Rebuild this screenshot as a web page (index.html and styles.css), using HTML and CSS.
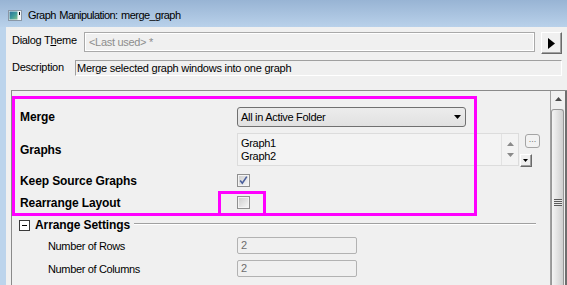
FILE: index.html
```html
<!DOCTYPE html>
<html>
<head>
<meta charset="utf-8">
<link rel="stylesheet" href="styles.css">
</head>
<body>
<div class="window">
  <div class="titlebar">
    <svg class="appicon" width="14" height="11" viewBox="0 0 14 11">
      <defs>
        <linearGradient id="ig" x1="0" y1="0" x2="1" y2="1">
          <stop offset="0" stop-color="#2a6f9a"/>
          <stop offset="0.5" stop-color="#3f9a9c"/>
          <stop offset="1" stop-color="#86c08c"/>
        </linearGradient>
      </defs>
      <rect x="0.5" y="0.5" width="13" height="10" fill="#f4f6f8" stroke="#8a97a6"/>
      <rect x="1.5" y="1.5" width="8" height="8" fill="url(#ig)"/>
      <rect x="11" y="2" width="1" height="3" fill="#000"/>
    </svg>
    <span class="title">Graph Manipulation: merge_graph</span>
  </div>
  <div class="frame">
    <div class="edge-left"></div>
    <div class="client">
      <div class="theme-row">
        <span class="lbl theme-lbl">Dialog T<u>h</u>eme</span>
        <div class="theme-box">&lt;Last used&gt; *</div>
        <div class="arrow-btn">
          <svg width="7" height="11" viewBox="0 0 7 11"><path d="M0 0 L7 5.5 L0 11 Z" fill="#000"/></svg>
        </div>
      </div>
      <div class="desc-row">
        <span class="lbl desc-lbl">Description</span>
        <div class="desc-box">Merge selected graph windows into one graph</div>
      </div>
      <div class="panel">
        <div class="tree">
          <div class="prow row-merge">
            <span class="plabel">Merge</span>
            <div class="combo">
              <span>All in Active Folder</span>
              <svg width="7" height="4" viewBox="0 0 7 4"><path d="M0 0 H7 L3.5 4 Z" fill="#000"/></svg>
            </div>
          </div>
          <div class="prow row-graphs">
            <span class="plabel">Graphs</span>
            <div class="listbox">
              <div class="items">
                <div>Graph1</div>
                <div>Graph2</div>
              </div>
              <div class="lscroll">
                <svg width="7" height="4" viewBox="0 0 7 4"><path d="M3.5 0 L7 4 H0 Z" fill="#8a8a8a"/></svg>
                <svg width="7" height="4" viewBox="0 0 7 4"><path d="M0 0 H7 L3.5 4 Z" fill="#8a8a8a"/></svg>
              </div>
            </div>
            <div class="side">
              <div class="dots-btn">...</div>
              <div class="mini-btn">
                <svg width="5" height="3" viewBox="0 0 5 3"><path d="M0 0 H5 L2.5 3 Z" fill="#000"/></svg>
              </div>
            </div>
          </div>
          <div class="prow row-check">
            <span class="plabel">Keep Source Graphs</span>
            <svg class="cb" width="13" height="13" viewBox="0 0 13 13">
              <defs>
                <linearGradient id="cbg" x1="0" y1="0" x2="1" y2="1">
                  <stop offset="0" stop-color="#cfcfcf"/>
                  <stop offset="1" stop-color="#f5f5f5"/>
                </linearGradient>
              </defs>
              <rect x="0.5" y="0.5" width="12" height="12" fill="#f4f4f4" stroke="#8f8f8f"/>
              <rect x="2" y="2" width="9" height="9" fill="url(#cbg)"/>
              <path d="M3.2 6.6 L5.3 9.2 L9.8 2.6" fill="none" stroke="#4a5f9c" stroke-width="1.6"/>
            </svg>
          </div>
          <div class="prow row-check">
            <span class="plabel">Rearrange Layout</span>
            <svg class="cb" width="13" height="13" viewBox="0 0 13 13">
              <rect x="0.5" y="0.5" width="12" height="12" fill="#f4f4f4" stroke="#8f8f8f"/>
              <rect x="2" y="2" width="9" height="9" fill="url(#cbg)"/>
            </svg>
          </div>
          <div class="group-head">
            <span class="minus"></span>
            <span class="gtitle">Arrange Settings</span>
            <span class="gline"></span>
          </div>
          <div class="prow sub-row first">
            <span class="sublabel">Number of Rows</span>
            <div class="numbox">2</div>
          </div>
          <div class="prow sub-row">
            <span class="sublabel">Number of Columns</span>
            <div class="numbox">2</div>
          </div>
        </div>
        <div class="vscroll">
          <div class="up">
            <svg width="7" height="4" viewBox="0 0 7 4"><path d="M3.5 0 L7 4 H0 Z" fill="#4a4a4a"/></svg>
          </div>
          <div class="thumb">
            <div class="grip"></div>
          </div>
        </div>
      </div>
    </div>
  </div>
  <div class="hl hl-main"></div>
  <div class="hl hl-check"></div>
</div>
</body>
</html>
```
FILE: styles.css
```css
* { box-sizing: border-box; }
body {
  margin: 0;
  font-family: "Liberation Sans", Arial, sans-serif;
  font-size: 11px;
  color: #000;
}
.window {
  position: relative;
  width: 567px;
  height: 285px;
  overflow: hidden;
  background: #f0f0f0;
}
.titlebar {
  height: 27px;
  display: flex;
  align-items: center;
  padding-left: 8px;
  background: linear-gradient(#98b4d4, #b9d1ea);
}
.appicon { margin-top: 3px; }
.title {
  margin-left: 6px;
  margin-top: 3px;
  font-size: 11px;
  letter-spacing: -0.55px;
  word-spacing: 1px;
}
.frame {
  display: flex;
  height: 258px;
}
.edge-left {
  width: 6px;
  background: #bcd4ec;
}
.client {
  flex: 1;
  display: flex;
  flex-direction: column;
  min-width: 0;
}
.lbl { letter-spacing: -0.3px; }
.theme-row {
  display: flex;
  align-items: flex-start;
  margin-top: 5px;
  height: 22px;
  padding-left: 6px;
}
.theme-lbl {
  width: 72px;
  line-height: 16px;
}
.theme-box {
  width: 451px;
  height: 20px;
  border: 1px solid #a9a9a9;
  box-shadow: inset 0 0 0 1px #fff;
  background: #f0f0f0;
  color: #8d8d8d;
  padding-left: 4px;
  line-height: 18px;
  letter-spacing: -0.3px;
}
.arrow-btn {
  margin-left: 6px;
  width: 21px;
  height: 22px;
  border-style: solid;
  border-width: 1px;
  border-color: #fff #6a6a6a #6a6a6a #fff;
  box-shadow: inset -1px -1px 0 #a0a0a0;
  background: #f0f0f0;
  display: flex;
  align-items: center;
  justify-content: center;
  padding-right: 1px;
}
.desc-row {
  display: flex;
  margin-top: 6px;
  height: 16px;
  padding-left: 6px;
}
.desc-lbl {
  width: 63px;
  line-height: 15px;
}
.desc-box {
  width: 487px;
  height: 16px;
  border-style: solid;
  border-width: 1px;
  border-color: #a0a0a0 #fff #fff #a0a0a0;
  padding-left: 1px;
  line-height: 14px;
  letter-spacing: -0.25px;
}
.panel {
  flex: 1;
  margin-top: 14px;
  margin-left: 5px;
  display: flex;
  border-top: 1px solid #8a8a8a;
  border-left: 1px solid #8a8a8a;
  min-height: 0;
}
.tree {
  flex: 1;
  display: flex;
  flex-direction: column;
  padding-top: 16px;
}
.prow {
  display: flex;
  align-items: center;
}
.plabel {
  width: 225px;
  flex: none;
  padding-left: 8px;
  font-weight: bold;
  font-size: 12px;
  letter-spacing: -0.1px;
}
.row-merge { height: 20px; }
.combo {
  width: 229px;
  height: 20px;
  border: 1px solid #707070;
  border-radius: 3px;
  background: linear-gradient(#ececec, #e1e1e1);
  display: flex;
  align-items: center;
  justify-content: space-between;
  padding: 0 4px 0 3px;
  letter-spacing: -0.3px;
}
.row-graphs {
  height: 33px;
  margin-top: 6px;
  align-items: flex-start;
}
.row-graphs .plabel { align-self: center; }
.listbox {
  width: 282px;
  height: 33px;
  border: 1px solid #dcdcdc;
  background: #f3f3f3;
  display: flex;
}
.items {
  flex: 1;
  padding: 3px 0 0 3px;
  line-height: 13px;
  letter-spacing: -0.3px;
}
.lscroll {
  width: 17px;
  border-left: 1px solid #e2e2e2;
  display: flex;
  flex-direction: column;
  align-items: center;
  justify-content: space-between;
  padding: 8px 0 8px;
}
.side {
  display: flex;
  flex-direction: column;
  align-items: flex-start;
}
.dots-btn {
  margin-left: 6px;
  margin-top: 1px;
  width: 15px;
  height: 14px;
  border: 1px solid #a4a4a4;
  border-radius: 3px;
  background: #f2f2f2;
  color: #7a7a7a;
  font-size: 9px;
  line-height: 9px;
  text-align: center;
  letter-spacing: 0;
}
.mini-btn {
  margin-left: 1px;
  margin-top: 6px;
  width: 12px;
  height: 13px;
  border-style: solid;
  border-width: 1px;
  border-color: #fff #6a6a6a #6a6a6a #fff;
  box-shadow: inset -1px -1px 0 #a0a0a0;
  background: #f0f0f0;
  display: flex;
  align-items: center;
  justify-content: center;
  padding: 0 1px 1px 0;
}
.row-check { height: 22px; }
.row-graphs + .row-check { margin-top: 4px; }
.cb { display: block; margin-top: -1px; }
.group-head {
  height: 22px;
  display: flex;
  align-items: center;
}
.minus {
  margin-left: 7px;
  width: 11px;
  height: 11px;
  border: 1px solid #3a3a3a;
  background: #fff;
  position: relative;
}
.minus::after {
  content: "";
  position: absolute;
  left: 2px;
  top: 4px;
  width: 5px;
  height: 1px;
  background: #000;
}
.gtitle {
  margin-left: 5px;
  font-weight: bold;
  font-size: 12px;
  letter-spacing: -0.1px;
}
.gline {
  flex: 1;
  margin: 0 14px 3px 4px;
  height: 2px;
  border-top: 1px solid #a0a0a0;
  border-bottom: 1px solid #fff;
}
.sub-row { height: 17px; margin-top: 6px; }
.sub-row.first { margin-top: 1px; }
.sublabel {
  width: 225px;
  flex: none;
  padding-left: 36px;
  letter-spacing: -0.35px;
}
.numbox {
  width: 120px;
  height: 17px;
  border: 1px solid #b2b2b2;
  border-radius: 2px;
  color: #6d6d6d;
  padding-left: 3px;
  line-height: 15px;
}
.vscroll {
  width: 17px;
  flex: none;
  border-left: 1px solid #a0a0a0;
  border-right: 2px solid #6f6f6f;
  display: flex;
  flex-direction: column;
}
.up {
  height: 18px;
  display: flex;
  align-items: center;
  justify-content: center;
  padding-bottom: 2px;
}
.thumb {
  flex: 1;
  margin-right: 1px;
  border: 1px solid #979797;
  border-bottom: none;
  border-radius: 3px 3px 0 0;
  background: linear-gradient(90deg, #f4f4f4, #e4e4e4 45%, #cfcfcf);
  position: relative;
}
.grip {
  position: absolute;
  left: 2px;
  top: 89px;
  width: 8px;
  height: 7px;
  background: repeating-linear-gradient(#5a5a5a 0 1px, #e8e8e8 1px 2px);
}
.hl {
  position: absolute;
  border: 3px solid #ff00ff;
}
.hl-main {
  left: 12px;
  top: 96px;
  width: 465px;
  height: 120px;
}
.hl-check {
  left: 218px;
  top: 191px;
  width: 48px;
  height: 25px;
}
```
